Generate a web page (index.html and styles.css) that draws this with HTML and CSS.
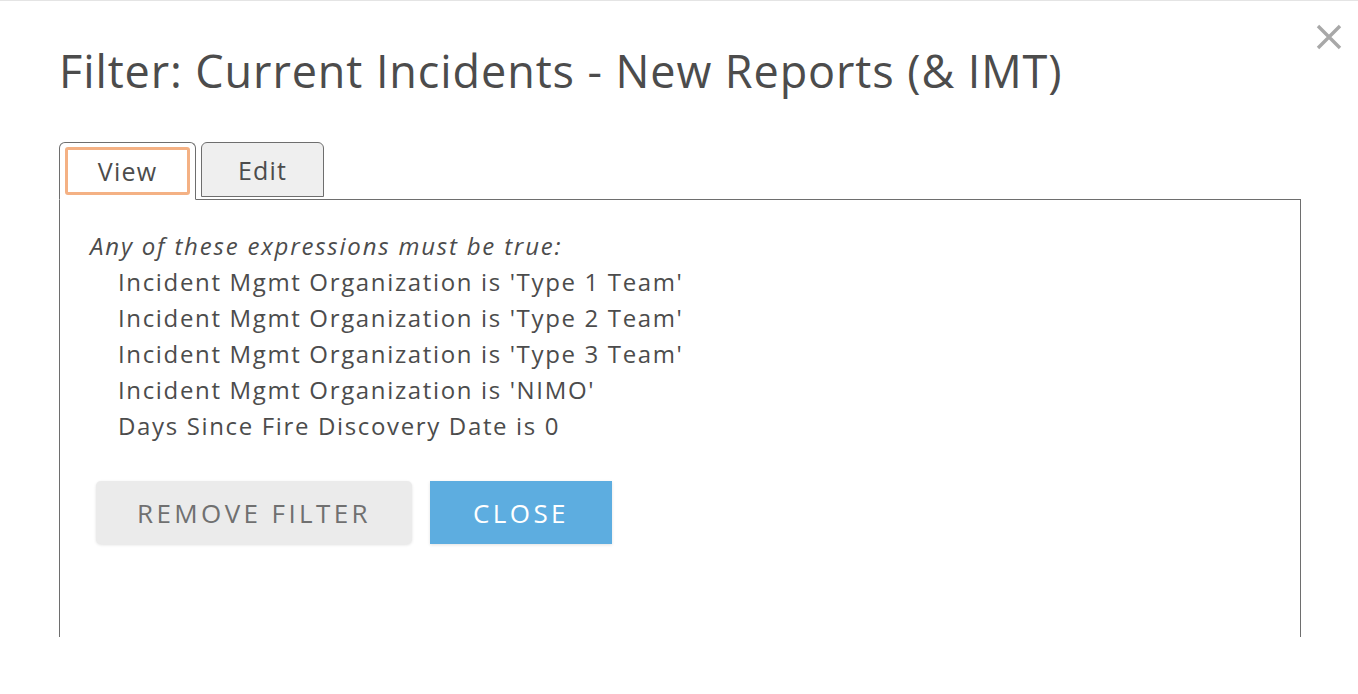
FILE: index.html
```html
<!DOCTYPE html>
<html lang="en">
<head>
  <meta charset="UTF-8" />
  <meta name="viewport" content="width=device-width, initial-scale=1.0" />
  <title>Filter: Current Incidents - New Reports (&amp; IMT)</title>
  <link rel="stylesheet" href="styles.css">
</head>
<body>
  <div class="dialog">
    <button class="close-x" aria-label="Close">
      <svg width="26" height="26" viewBox="0 0 26 26">
        <path d="M2 2 L24 24 M24 2 L2 24" stroke="#a8a8a8" stroke-width="3.4" fill="none" />
      </svg>
    </button>

    <h1>Filter: Current Incidents - New Reports (&amp; IMT)</h1>

    <div class="tabs">
      <div class="tab active"><span>View</span></div>
      <div class="tab"><span>Edit</span></div>
    </div>

    <div class="panel">
      <p class="intro">Any of these expressions must be true:</p>
      <ul class="expressions">
        <li>Incident Mgmt Organization is 'Type 1 Team'</li>
        <li>Incident Mgmt Organization is 'Type 2 Team'</li>
        <li>Incident Mgmt Organization is 'Type 3 Team'</li>
        <li>Incident Mgmt Organization is 'NIMO'</li>
        <li>Days Since Fire Discovery Date is 0</li>
      </ul>

      <div class="actions">
        <button class="btn btn-remove">Remove filter</button>
        <button class="btn btn-close">Close</button>
      </div>
    </div>
  </div>
</body>
</html>
```

FILE: styles.css
```css
body {
  margin: 0;
  font-family: "Open Sans", Lato, sans-serif;
  color: #4c4c4c;
  background: #fff;
  border-top: 1px solid #e4e4e4;
}
.dialog {
  position: relative;
  padding: 0 57px 0 59px;
  height: 693px;
}
.close-x {
  position: absolute;
  top: 23px;
  right: 16px;
  padding: 0;
  border: none;
  background: none;
  cursor: pointer;
}
h1 {
  margin: 0;
  padding: 44px 0 0 0;
  font-size: 45px;
  font-weight: 400;
  letter-spacing: 0.9px;
  line-height: 52px;
}
.tabs {
  display: flex;
  gap: 5px;
  margin-top: 45px;
}
.tab {
  display: flex;
  width: 123px;
  height: 55px;
  padding: 0;
  border: 1px solid #6e6e6e;
  border-radius: 6px 6px 0 0;
  background: #efefef;
  font-size: 25px;
  letter-spacing: 1.2px;
  box-sizing: border-box;
  align-items: center;
  justify-content: center;
  margin-bottom: -1px;
}
.tab.active {
  width: 137px;
  height: 58px;
  background: #fff;
  border-bottom-color: #fff;
  padding: 4px 5px 4px 5px;
}
.tab.active span {
  display: flex;
  flex: 1;
  align-self: stretch;
  align-items: center;
  justify-content: center;
  border: 3px solid #f4b184;
  border-radius: 3px;
}
.panel {
  border: 1px solid #6e6e6e;
  border-bottom: none;
  height: 438px;
  padding: 28px 30px 0;
  box-sizing: border-box;
}
.intro {
  margin: 0;
  font-style: italic;
  font-size: 24px;
  letter-spacing: 1.8px;
  line-height: 36px;
}
.expressions {
  list-style: none;
  margin: 0;
  padding: 0 0 0 28px;
  font-size: 24px;
  letter-spacing: 1.65px;
  line-height: 36px;
}
.actions {
  display: flex;
  gap: 18px;
  margin-top: 37px;
  padding-left: 6px;
}
.btn {
  height: 63px;
  border: none;
  font-family: inherit;
  font-size: 26px;
  letter-spacing: 3.4px;
  text-transform: uppercase;
  cursor: pointer;
  box-shadow: 0 1px 3px rgba(0,0,0,0.12);
}
.btn-remove {
  width: 316px;
  background: #ebebeb;
  color: #707070;
  border-radius: 5px;
}
.btn-close {
  width: 182px;
  background: #5dade0;
  color: #fff;
}
```
